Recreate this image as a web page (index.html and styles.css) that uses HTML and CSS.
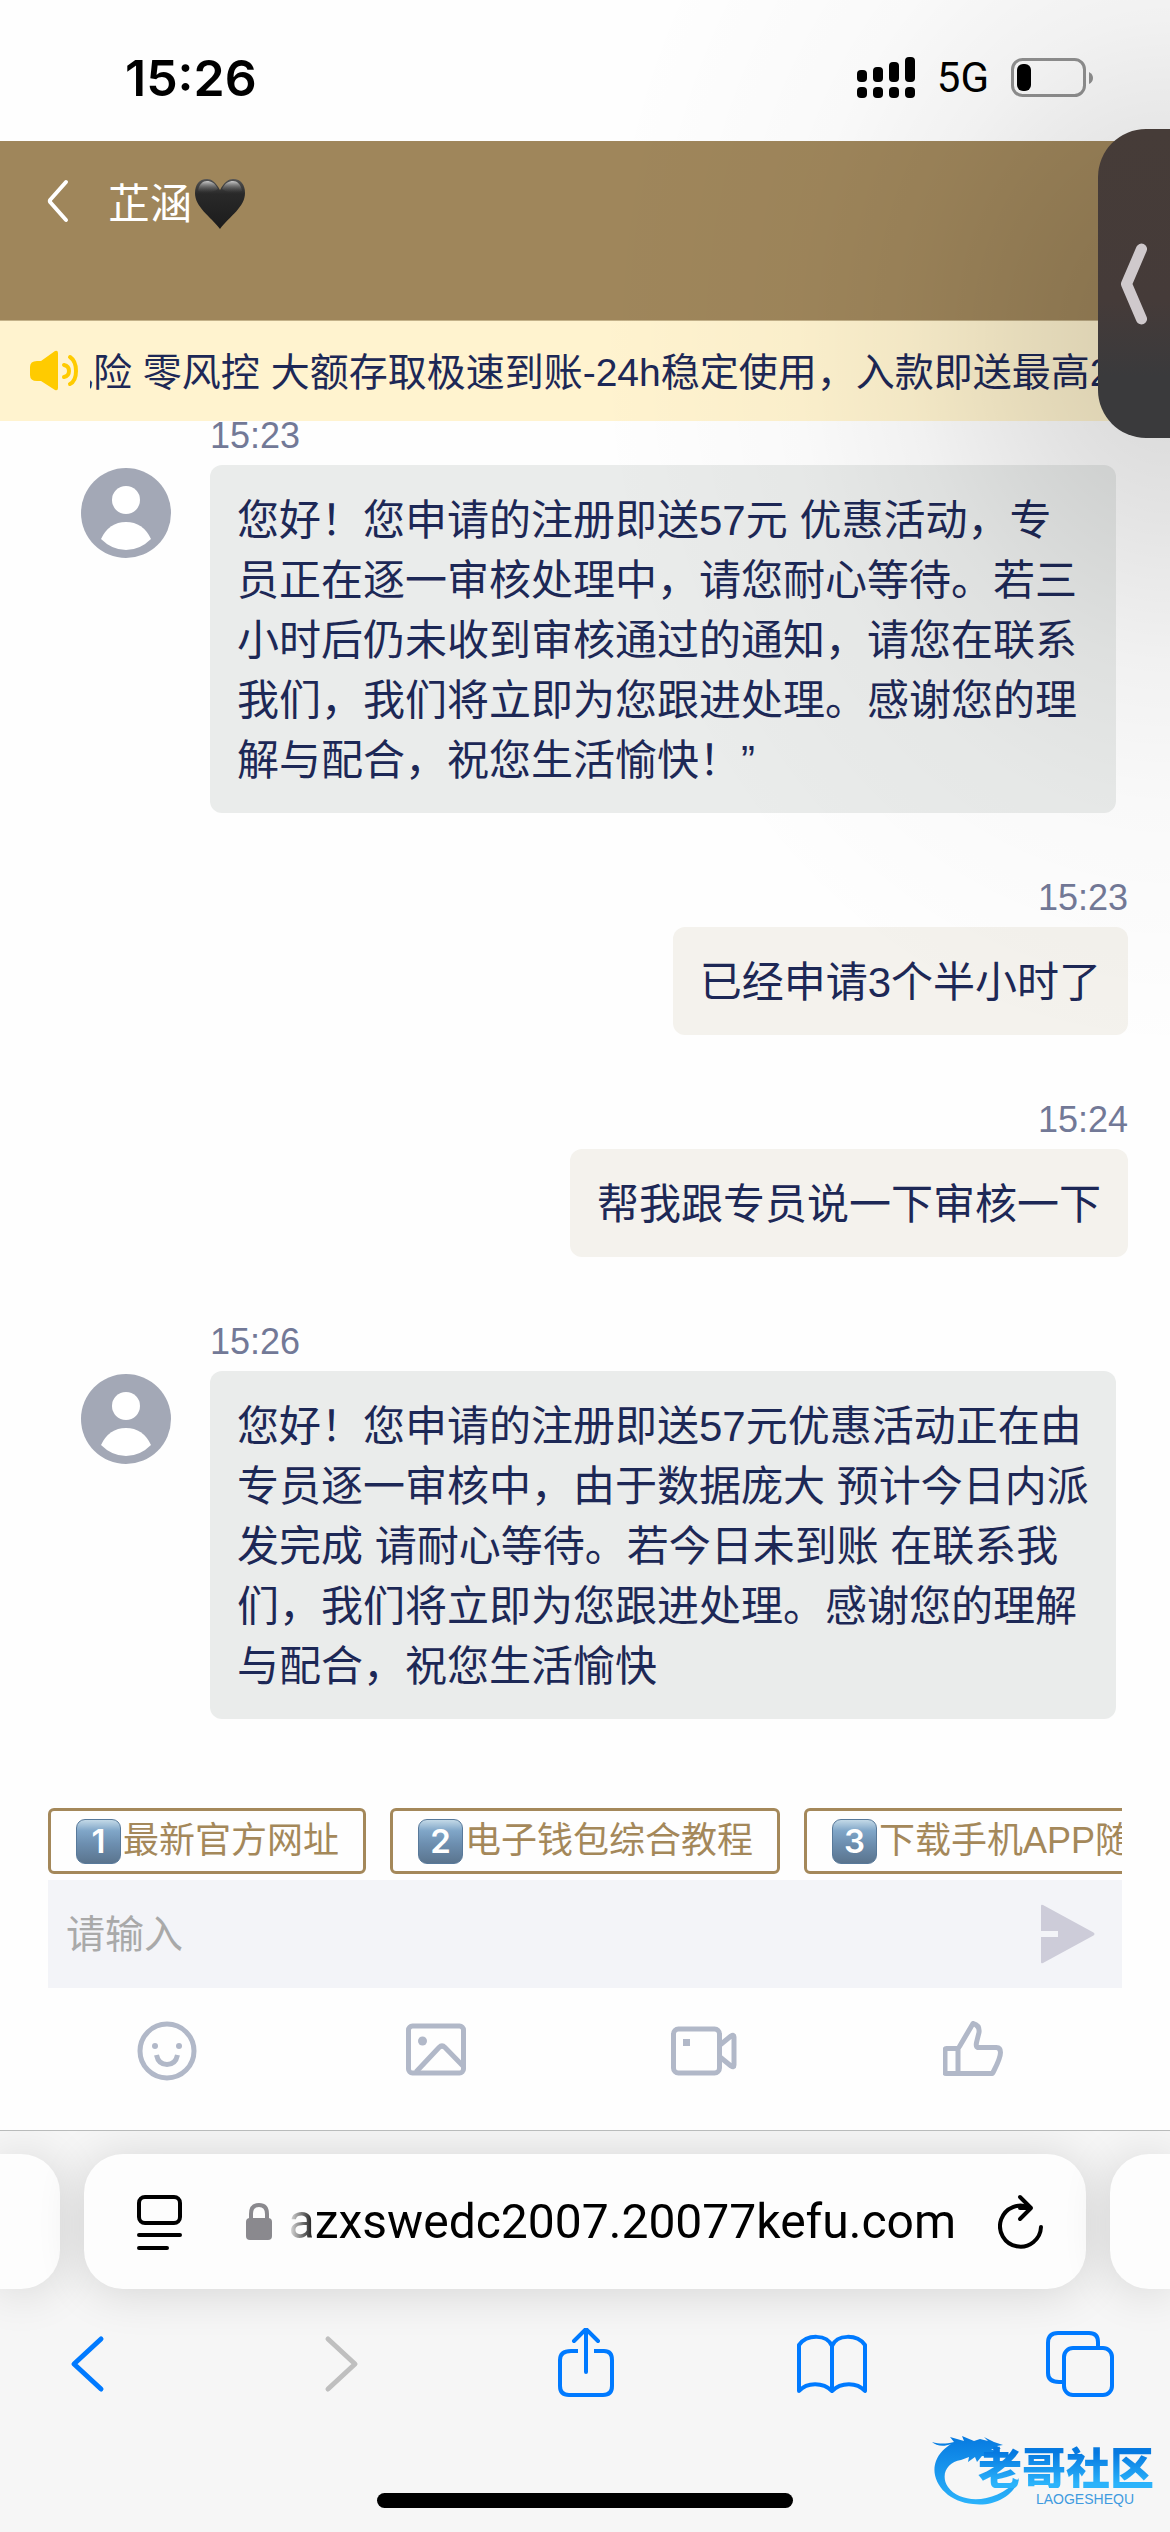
FILE: index.html
```html
<!DOCTYPE html>
<html lang="zh-CN">
<head>
<meta charset="utf-8">
<meta name="viewport" content="width=device-width, initial-scale=1">
<title>在线客服</title>
<link rel="stylesheet" href="styles.css">
</head>
<body>
<div class="screen">
  <div class="status">
    <time class="status-time">15:26</time>
    <div class="status-right">
      <svg class="signal" width="58" height="42" viewBox="0 0 58 42" aria-hidden="true">
        <rect x="0" y="13" width="10" height="12" rx="4"/><rect x="16" y="10" width="10" height="15" rx="4"/><rect x="32" y="5" width="10" height="20" rx="4"/><rect x="48" y="0" width="10" height="25" rx="4"/>
        <rect x="0" y="30" width="10" height="11" rx="4"/><rect x="16" y="30" width="10" height="11" rx="4"/><rect x="32" y="30" width="10" height="11" rx="4"/><rect x="48" y="30" width="10" height="11" rx="4"/>
      </svg>
      <span class="network">5G</span>
      <svg width="83" height="40" viewBox="0 0 83 40" aria-hidden="true">
        <rect x="1.500" y="1.500" width="72" height="36" rx="10" fill="none" stroke="#929292" stroke-width="3"/>
        <rect x="6" y="6" width="14" height="27" rx="6"/>
        <path d="M78 14q4 2 4 6t-4 6z" fill="#929292"/>
      </svg>
    </div>
  </div>

  <header class="header">
    <button class="back" aria-label="返回">
      <svg width="24" height="44" viewBox="0 0 24 44"><path d="M20 3L4.500 20.500q-1.500 1.500 0 3L20 41" fill="none" stroke="#fff" stroke-width="4" stroke-linecap="round"/></svg>
    </button>
    <h1 class="title">芷涵</h1>
    <svg class="heart" width="50" height="50" viewBox="0 0 50 50" aria-label="黑心">
      <defs>
        <linearGradient id="hg" x1="0" y1="0" x2="0" y2="1"><stop offset="0" stop-color="#555"/><stop offset=".3" stop-color="#292929"/><stop offset="1" stop-color="#1b1b1b"/></linearGradient>
        <linearGradient id="hs" x1="0" y1="0" x2="0" y2="1"><stop offset="0" stop-color="#e8e8e8"/><stop offset="1" stop-color="#555" stop-opacity="0"/></linearGradient>
      </defs>
      <path d="M25 11C21 3 16 0 12 0 4 0 0 6 0 14c0 14 15 23 25 36C35 37 50 28 50 14 50 6 46 0 38 0c-4 0-9 3-13 11z" fill="url(#hg)"/>
      <path d="M3 12C4 5 8 2 12 2c4 0 8 2 11 8-5 4-14 5-20 2zM47 12C46 5 42 2 38 2c-4 0-8 2-11 8 5 4 14 5 20 2z" fill="url(#hs)" opacity=".8"/>
    </svg>
  </header>

  <div class="notice">
    <svg class="speaker" width="48" height="42" viewBox="0 0 48 42" aria-hidden="true">
      <path d="M0 17q0-6 7-6h4L25 1q3-1 3 2v35q0 3-3 2L11 31H7q-7 0-7-6z" fill="#ffcb00"/>
      <path d="M34 15q5 1 5 6t-5 6M40 7q6 4 6 14t-6 13" fill="none" stroke="#ffcb00" stroke-width="4" stroke-linecap="round"/>
    </svg>
    <div class="ticker"><p class="ticker-text">风险 零风控 大额存取极速到账-24h稳定使用，入款即送最高2</p></div>
  </div>

  <main class="chat">
    <article class="msg">
      <svg class="avatar" viewBox="0 0 90 90" aria-hidden="true"><circle cx="45" cy="45" r="45" fill="#a3a8b6"/><circle cx="45" cy="32" r="14" fill="#fff"/><path d="M20 71Q28 54 45 54T70 71Q59 82 45 82T20 71z" fill="#fff"/></svg>
      <div class="body">
        <time class="time">15:23</time>
        <p class="bubble">您好！您申请的注册即送57元 优惠活动，专员正在逐一审核处理中，请您耐心等待。若三小时后仍未收到审核通过的通知，请您在联系我们，我们将立即为您跟进处理。感谢您的理解与配合，祝您生活愉快！”</p>
      </div>
    </article>
    <article class="msg mine">
      <div class="body">
        <time class="time">15:23</time>
        <p class="bubble">已经申请3个半小时了</p>
      </div>
    </article>
    <article class="msg mine">
      <div class="body">
        <time class="time">15:24</time>
        <p class="bubble">帮我跟专员说一下审核一下</p>
      </div>
    </article>
    <article class="msg">
      <svg class="avatar" viewBox="0 0 90 90" aria-hidden="true"><circle cx="45" cy="45" r="45" fill="#a3a8b6"/><circle cx="45" cy="32" r="14" fill="#fff"/><path d="M20 71Q28 54 45 54T70 71Q59 82 45 82T20 71z" fill="#fff"/></svg>
      <div class="body">
        <time class="time">15:26</time>
        <p class="bubble">您好！您申请的注册即送57元优惠活动正在由专员逐一审核中，由于数据庞大 预计今日内派发完成 请耐心等待。若今日未到账 在联系我们，我们将立即为您跟进处理。感谢您的理解与配合，祝您生活愉快</p>
      </div>
    </article>
  </main>

  <div class="quick">
    <button class="chip"><span class="key">1</span>最新官方网址</button>
    <button class="chip"><span class="key">2</span>电子钱包综合教程</button>
    <button class="chip"><span class="key">3</span>下载手机APP随</button>
  </div>

  <form class="composer">
    <input class="composer-input" type="text" placeholder="请输入" aria-label="消息">
    <button class="send" type="button" aria-label="发送">
      <svg width="54" height="60" viewBox="0 0 54 60"><path d="M0 2q0-2 2-1L52.500 28.500q2 1.500 0 3L2 59q-2 1-2-1V33h17v-6H0z" fill="#cdccd9"/></svg>
    </button>
  </form>

  <div class="tools">
    <button class="tool" aria-label="表情">
      <svg width="60" height="60" viewBox="0 0 60 60"><circle cx="30" cy="30" r="27"/><circle class="dot" cx="18" cy="25" r="3"/><circle class="dot" cx="42" cy="25" r="3"/><path d="M19.500 34q2 9.500 10.500 9.500T40.500 34"/></svg>
    </button>
    <button class="tool" aria-label="图片">
      <svg width="60" height="60" viewBox="0 0 60 60"><rect x="2.500" y="5" width="55" height="47" rx="4"/><circle class="dot" cx="16.500" cy="20" r="4.500"/><path d="M10 51L33 26.500q3-3 6 0L57 45"/></svg>
    </button>
    <button class="tool" aria-label="视频">
      <svg width="66" height="60" viewBox="0 0 66 60"><rect x="2.500" y="8" width="46" height="44" rx="5"/><rect class="dot" x="12" y="18" width="7" height="7"/><path d="M49 24l11-9q3-2 3 1v28q0 3-3 1l-11-9"/></svg>
    </button>
    <button class="tool" aria-label="点赞">
      <svg width="60" height="60" viewBox="0 0 60 60"><path d="M3.500 27.500h10q2 0 3-2L30 2.500q7 2 6 9l-2.500 10q-1 5 2 5h18q4 0 4 5c0 6-4 13-8 21H3q-1 0-1-1V29q0-1.500 1.500-1.500zM15 28v24"/></svg>
    </button>
  </div>

  <footer class="browser">
    <div class="tabs-row">
      <div class="tab-edge tab-prev"></div>
      <div class="address">
        <button class="icon-btn" aria-label="页面菜单">
          <svg width="45" height="56" viewBox="0 0 45 56" fill="none" stroke="#000" stroke-width="4" stroke-linecap="round"><rect x="2" y="3" width="41" height="26" rx="6"/><path d="M2 41h41M2 54h28"/></svg>
        </button>
        <svg class="lock" width="26" height="38" viewBox="0 0 26 38" aria-hidden="true"><rect y="15" width="26" height="22" rx="4" fill="#8a898e"/><path d="M5 17V11q0-9 8-9t8 9v6" fill="none" stroke="#8a898e" stroke-width="4"/></svg>
        <input class="url" type="text" value="azxswedc2007.20077kefu.com" aria-label="网址">
        <button class="icon-btn" aria-label="刷新">
          <svg width="46" height="56" viewBox="0 0 46 56" fill="none" stroke="#000" stroke-width="4" stroke-linecap="round" stroke-linejoin="round"><path d="M43 33A20.500 20.500 0 1 1 32 14"/><path d="M22 3l11 11-11 11M33 14H22"/></svg>
        </button>
      </div>
      <div class="tab-edge tab-next"></div>
    </div>
    <nav class="nav">
      <button class="icon-btn" aria-label="后退"><svg class="nav-icon arrow" viewBox="0 0 72 72"><path d="M50 11L23 36l27 25" /></svg></button>
      <button class="icon-btn" aria-label="前进" disabled><svg class="nav-icon arrow off" viewBox="0 0 72 72"><path d="M29 11l27 25-27 25"/></svg></button>
      <button class="icon-btn" aria-label="分享"><svg class="nav-icon" viewBox="0 0 72 72"><path d="M30 23h-7q-11 0-11 9v26q0 9 9 9h34q9 0 9-9V32q0-9-8-9H46" stroke-linecap="butt"/><path d="M38 44V2M26 13L38 1l12 12"/></svg></button>
      <button class="icon-btn" aria-label="书签"><svg class="nav-icon" viewBox="0 0 72 72"><path d="M36 18C31 6 11 6 3 17v46c8-9 24-9 33 0 9-9 25-9 33 0V17C61 6 41 6 36 18zV62"/></svg></button>
      <button class="icon-btn" aria-label="标签页"><svg class="nav-icon" viewBox="0 0 72 72"><path d="M18 54h-3q-11 0-11-9V15q0-10 10-10h31q9 0 9 9v4"/><rect x="20" y="20" width="48" height="47" rx="9"/></svg></button>
    </nav>
    <div class="home"></div>
  </footer>

  <div class="vignette"></div>
  <button class="handle" aria-label="展开">
    <svg width="26" height="82" viewBox="0 0 26 82"><path d="M20.500 6L5.500 41l15 35" fill="none" stroke="#cfc9cc" stroke-width="11" stroke-linecap="round" stroke-linejoin="round"/></svg>
  </button>

  <div class="brand">
    <svg class="brand-mark" width="100" height="78" viewBox="0 0 100 78" aria-hidden="true">
      <defs><linearGradient id="bg" x1="0" y1="0" x2="0" y2="1"><stop offset="0" stop-color="#0679e0"/><stop offset="1" stop-color="#2bb3fb"/></linearGradient></defs>
      <path d="M0 12c8 2 13 2 22 0l-4-5 14 4-2-5 12 5 6-2 8 2-4-4 10 5 9 3-6 1 4 3-10 0 7 4-10 0 4 4-10-1-5 6-2-5-7 5 1-5-8 3C15 32 8 45 16 57c12 17 48 18 71-9-4 18-26 29-46 26C14 72-3 50 4 31 7 23 13 18 19 14 12 17 4 16 0 12z" fill="url(#bg)"/>
    </svg>
    <span class="brand-name">老哥社区</span>
    <span class="brand-sub">LAOGESHEQU</span>
  </div>
</div>
</body>
</html>
```
FILE: styles.css
```css
* { box-sizing: border-box; }

body {
  margin: 0;
  background: #fefefe;
  color: #1d2856;
  font-family: "Liberation Sans", "Noto Sans CJK SC", sans-serif;
}

button {
  margin: 0;
  padding: 0;
  border: 0;
  background: none;
  color: inherit;
  font: inherit;
}

svg { display: block; flex: none; }
h1, p { margin: 0; }

.screen {
  position: relative;
  display: flex;
  flex-direction: column;
  min-height: 100vh;
  overflow: hidden;
}

/* status bar */
.status {
  display: flex;
  align-items: center;
  justify-content: space-between;
  height: 141px;
  padding: 15px 76px 0 125px;
  color: #000;
}
.status-time { font: 600 50px/60px Inter, sans-serif; }
.status-right { display: flex; align-items: center; gap: 22px; }
.network { font: 42px/48px Roboto, sans-serif; }

/* chat header */
.header {
  display: flex;
  align-items: flex-start;
  height: 180px;
  padding: 38px 46px 0;
  background: #9f865b;
  border-bottom: 1px solid #c4b28a;
  color: #fff;
}
.back { margin-right: 38px; }
.title { font-size: 42px; line-height: 52px; font-weight: 400; }
.heart { margin-left: 3px; }

.notice {
  position: relative;
  z-index: 1;
  display: flex;
  align-items: center;
  gap: 12px;
  height: 100px;
  padding-left: 30px;
  background: #fff3cf;
}
.ticker { flex: 1; min-width: 0; padding-top: 4px; overflow: hidden; }
.ticker-text {
  margin-left: -36px;
  font-size: 39px;
  line-height: 60px;
  white-space: nowrap;
}

/* conversation, kept scrolled to the newest message */
.chat {
  flex: 1 1 0;
  display: flex;
  flex-direction: column;
  justify-content: flex-end;
  gap: 62px;
  min-height: 0;
  padding: 0 42px 89px 81px;
  overflow: hidden;
}
.msg {
  display: flex;
  flex: none;
  align-items: flex-start;
  gap: 39px;
  padding-right: 12px;
}
.avatar { width: 90px; height: 90px; margin-top: 55px; }
.body { flex: 1; display: flex; flex-direction: column; gap: 6px; }
.time { color: #727997; font-size: 36px; line-height: 46px; }
.bubble {
  padding: 26px 24px 22px 27px;
  border-radius: 12px;
  background: #eaeceb;
  font-size: 42px;
  line-height: 60px;
}
.mine { padding-right: 0; }
.mine .body { align-items: flex-end; }
.mine .bubble { padding-right: 27px; background: #f4f2ed; }

/* quick replies */
.quick {
  display: flex;
  gap: 24px;
  margin: 0 48px 6px;
  overflow: hidden;
}
.chip {
  display: flex;
  flex: none;
  align-items: center;
  height: 66px;
  padding: 0 24px;
  border: 3px solid #a4885a;
  border-radius: 6px;
  color: #a4885a;
  font-size: 36px;
  line-height: 48px;
  white-space: nowrap;
}
.key {
  width: 45px;
  height: 45px;
  margin: 0 2px 0 1px;
  border: 1px solid #58799a;
  border-radius: 9px;
  background: linear-gradient(#c3d9e7, #80a6c8 25%, #6d8fb0 55%, #5a748e);
  color: #fff;
  font: 600 33px/43px Inter, sans-serif;
  text-align: center;
}

.composer {
  display: flex;
  align-items: center;
  height: 108px;
  margin: 0 48px;
  padding: 0 27px 0 18px;
  background: #f3f4f8;
}
.composer-input {
  flex: 1;
  min-width: 0;
  padding: 2px 0 0;
  border: 0;
  outline: 0;
  background: none;
  color: inherit;
  font: inherit;
  font-size: 39px;
  line-height: 60px;
}
.composer-input::placeholder { color: #a9a9a9; opacity: 1; }

.tools {
  display: grid;
  grid-template-columns: repeat(4, 1fr);
  align-items: center;
  padding: 33px 63px 49px 33px;
}
.tool { display: flex; justify-content: center; }
.tool svg { fill: none; stroke: #b1b8c8; stroke-width: 5; stroke-linejoin: round; }
.tool .dot { fill: #b1b8c8; stroke: none; }

/* browser chrome */
.browser {
  overflow: hidden;
  padding: 23px 0 24px;
  border-top: 1px solid #b9bbbb;
  background: #f6f6f6;
}
.tabs-row { display: flex; gap: 24px; height: 135px; }
.tab-edge, .address {
  background: #fdfdfd;
  box-shadow: 0 3px 48px rgba(0, 0, 0, 0.14);
}
.tab-edge { width: 60px; }
.tab-prev { border-radius: 0 39px 39px 0; }
.tab-next { border-radius: 39px 0 0 39px; }
.address {
  flex: 1;
  display: flex;
  align-items: center;
  min-width: 0;
  padding: 0 42px 0 53px;
  border-radius: 39px;
}
.lock { margin: 0 14px 0 64px; }
.url {
  flex: 1;
  min-width: 0;
  margin-right: 42px;
  padding: 0;
  border: 0;
  outline: 0;
  background: none;
  color: #000;
  font: 48px/60px Roboto, sans-serif;
  text-align: right;
  -webkit-mask-image: linear-gradient(90deg, transparent, #000 30px);
  mask-image: linear-gradient(90deg, transparent, #000 30px);
}
.nav {
  display: flex;
  justify-content: space-between;
  padding: 39px 54px 93px 51px;
}
.nav-icon {
  width: 72px;
  height: 72px;
  fill: none;
  stroke: #007aff;
  stroke-width: 4;
  stroke-linecap: round;
  stroke-linejoin: round;
}
.arrow { stroke-width: 5; }
.off { stroke: #bfbfbf; }
.home {
  width: 416px;
  height: 15px;
  margin: 0 auto;
  border-radius: 8px;
  background: #000;
}

/* floating side handle and the shade it casts */
.vignette {
  position: absolute;
  z-index: 2;
  top: 0;
  right: 0;
  width: 600px;
  height: 1100px;
  pointer-events: none;
  background: radial-gradient(ellipse 580px 720px at 100% 340px,
    rgba(0, 0, 0, 0.16), rgba(0, 0, 0, 0.11) 22%, rgba(0, 0, 0, 0.05) 45%,
    rgba(0, 0, 0, 0.02) 65%, rgba(0, 0, 0, 0) 100%);
}
.handle {
  position: absolute;
  z-index: 3;
  top: 129px;
  right: 0;
  display: flex;
  align-items: center;
  width: 72px;
  height: 309px;
  padding-left: 23px;
  border-radius: 48px 0 0 48px;
  background: linear-gradient(#463c38, #453b39 55%, #3a3a3c 80%);
}

.brand {
  position: absolute;
  right: 16px;
  bottom: 24px;
  width: 222px;
  height: 78px;
}
.brand-mark { position: absolute; left: 0; top: 0; }
.brand-name {
  position: absolute;
  right: 0;
  top: 14px;
  background: linear-gradient(#0679e0 20%, #2bb3fb 90%);
  background-clip: text;
  -webkit-background-clip: text;
  color: transparent;
  font: 900 44px/44px "Noto Sans CJK SC", sans-serif;
}
.brand-sub {
  position: absolute;
  right: 20px;
  top: 62px;
  color: #3f9be0;
  font-size: 14px;
  line-height: 14px;
}
```
